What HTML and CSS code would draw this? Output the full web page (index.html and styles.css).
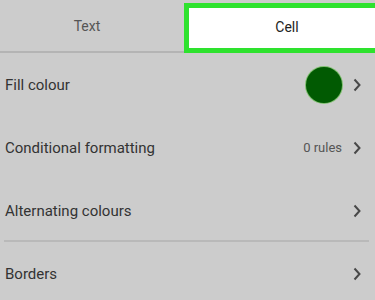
FILE: index.html
```html
<!DOCTYPE html>
<html lang="en">
<head>
    <meta charset="UTF-8">
    <meta name="viewport" content="width=device-width, initial-scale=1.0">
    <title>Format - Cell</title>
    <link rel="stylesheet" href="styles.css">
</head>
<body>

    <div class="tabs">
        <div class="tab tab-text">Text</div>
        <div class="tab tab-cell">Cell</div>
    </div>

    <div class="list">
        <div class="row">
            <span class="label">Fill colour</span>
            <span class="right">
                <span class="swatch"></span>
                <svg class="chevron" viewBox="0 0 8 14"><path d="M1.5 1.5 L6.5 7 L1.5 12.5" /></svg>
            </span>
        </div>
        <div class="row">
            <span class="label">Conditional formatting</span>
            <span class="right">
                <span class="count">0 rules</span>
                <svg class="chevron" viewBox="0 0 8 14"><path d="M1.5 1.5 L6.5 7 L1.5 12.5" /></svg>
            </span>
        </div>
        <div class="row">
            <span class="label">Alternating colours</span>
            <span class="right">
                <svg class="chevron" viewBox="0 0 8 14"><path d="M1.5 1.5 L6.5 7 L1.5 12.5" /></svg>
            </span>
        </div>
        <div class="divider"></div>
        <div class="row">
            <span class="label">Borders</span>
            <span class="right">
                <svg class="chevron" viewBox="0 0 8 14"><path d="M1.5 1.5 L6.5 7 L1.5 12.5" /></svg>
            </span>
        </div>
    </div>

</body>
</html>
```

FILE: styles.css
```css
body {
    margin: 0;
    background: #cccccc;
    font-family: Roboto, "Liberation Sans", sans-serif;
    color: #333;
    overflow: hidden;
}
.tabs {
    display: flex;
    height: 53px;
}
.tab {
    display: flex;
    align-items: center;
    justify-content: center;
    font-size: 14px;
    box-sizing: border-box;
}
.tab-text {
    flex: 0 0 184px;
    color: #555;
    padding-right: 10px;
    border-bottom: 2px solid #b4b4b4;
}
.tab-cell {
    flex: 1;
    margin-top: 3px;
    height: 50px;
    background: #fff;
    color: #222;
    border: 5px solid #2ee22e; /* highlight box */
    border-right: none;
    padding-left: 10px;
    padding-bottom: 2px;
}
.row {
    display: flex;
    align-items: center;
    justify-content: space-between;
    height: 63px;
    padding: 0 14px 0 5px;
}
.label {
    font-size: 15px;
    color: #333;
}
.right {
    display: flex;
    align-items: center;
}
.count {
    font-size: 13px;
    color: #555;
    margin-right: 11px;
}
.swatch {
    width: 36px;
    height: 36px;
    border-radius: 50%;
    background: #015a02;
    box-shadow: 0 0 0 1px #7fbf6f;
    margin-right: 11px;
}
.chevron {
    width: 8px;
    height: 14px;
}
.chevron path {
    fill: none;
    stroke: #484848;
    stroke-width: 2;
}
.divider {
    height: 2px;
    background: #b9b9b9;
    margin: -2px 6px 0 4px;
    position: relative;
}
```
